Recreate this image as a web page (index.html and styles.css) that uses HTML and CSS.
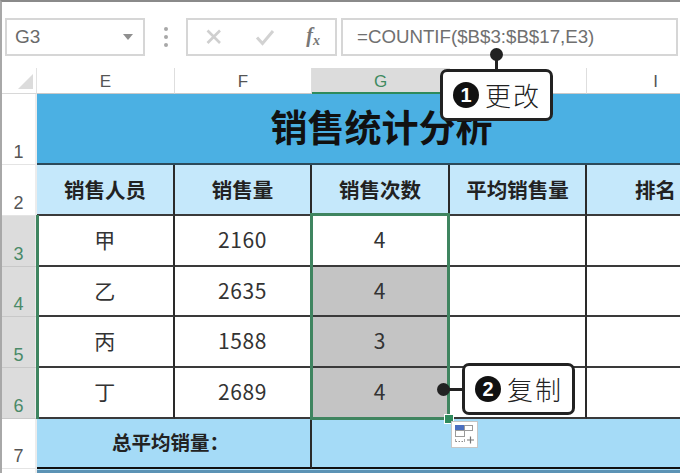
FILE: index.html
```html
<!DOCTYPE html>
<html lang="zh">
<head>
<meta charset="utf-8">
<title>销售统计分析</title>
<link rel="stylesheet" href="styles.css">
</head>
<body>
<div class="window">
  <div class="toolbar">
    <div class="namebox"><span>G3</span><i class="caret"></i></div>
    <div class="dots"><i></i><i></i><i></i></div>
    <div class="fxbox">
      <svg class="ic" width="18" height="18" viewBox="0 0 18 18"><path d="M2.500 2.500L15 15M15 2.500L2.500 15" stroke="#cfcfcf" stroke-width="2.600" fill="none"/></svg>
      <svg class="ic" width="20" height="18" viewBox="0 0 20 18"><path d="M2 9.500L7.500 15.500L18 3" stroke="#d2d2d2" stroke-width="3" fill="none"/></svg>
      <span class="fx">f<sub>x</sub></span>
    </div>
    <div class="formula">=COUNTIF($B$3:$B$17,E3)</div>
  </div>
  <div class="sheet">
    <div class="corner"><i></i></div>
    <div class="ch">E</div><div class="ch">F</div><div class="ch sel">G</div><div class="ch"></div><div class="ch last">I</div>

    <div class="rh">1</div>
    <div class="title">销售统计分析</div>

    <div class="rh">2</div>
    <div class="c head">销售人员</div><div class="c head">销售量</div><div class="c head">销售次数</div><div class="c head">平均销售量</div><div class="c head last">排名</div>

    <div class="rh rsel">3</div>
    <div class="c">甲</div><div class="c">2160</div><div class="c">4</div><div class="c"></div><div class="c last"></div>

    <div class="rh rsel">4</div>
    <div class="c">乙</div><div class="c">2635</div><div class="c gray">4</div><div class="c"></div><div class="c last"></div>

    <div class="rh rsel">5</div>
    <div class="c">丙</div><div class="c">1588</div><div class="c gray">3</div><div class="c"></div><div class="c last"></div>

    <div class="rh rsel">6</div>
    <div class="c">丁</div><div class="c">2689</div><div class="c gray">4</div><div class="c"></div><div class="c last"></div>

    <div class="rh">7</div>
    <div class="c total">总平均销量：</div><div class="c totalv"></div>

    <div class="rh tail"></div>
    <div class="tailrow"></div>
  </div>

  <div class="selection"><i class="handle"></i></div>
  <div class="rangeleft"></div>
  <div class="paste">
    <svg width="26" height="26" viewBox="0 0 26 26">
      <rect x="3.500" y="3.500" width="9" height="5" fill="#4a6fc0" stroke="#4a6fc0"/>
      <rect x="12.500" y="3.500" width="8" height="5" fill="#fff" stroke="#9a9a9a"/>
      <rect x="3.500" y="8.500" width="9" height="6" fill="#fff" stroke="#9a9a9a"/>
      <path d="M3.500 19.500h9" stroke="#888" stroke-dasharray="1.500 1.500" fill="none"/>
      <path d="M3.500 17v3M12.500 17v3" stroke="#aaa" fill="none"/>
      <path d="M15 18h7M18.500 14.500v7" stroke="#777" stroke-width="1.200" fill="none"/>
    </svg>
  </div>

  <div class="callout one">
    <i class="leader lv"></i><i class="dot"></i>
    <span class="num">1</span><span class="label">更改</span>
  </div>
  <div class="callout two">
    <i class="leader lh"></i><i class="dot"></i>
    <span class="num">2</span><span class="label">复制</span>
  </div>
</div>
</body>
</html>
```
FILE: styles.css
```css
* { box-sizing: border-box; }
html, body { margin: 0; padding: 0; background: #fff; }
body { width: 680px; height: 473px; overflow: hidden; font-family: "Noto Sans CJK SC", "Liberation Sans", sans-serif; color: #333; }
.window { position: relative; width: 680px; height: 473px; border-top: 2px solid #8a8a8a; border-left: 2px solid #a8a8a8; overflow: hidden; }

.toolbar { display: flex; align-items: center; height: 66px; padding: 15px 2px 12px 3px; }
.namebox, .fxbox, .formula { height: 38px; border: 2px solid #d6d6d6; background: #fff; display: flex; align-items: center; }
.namebox { width: 140px; padding: 0 10px 0 8px; justify-content: space-between; font: 19px "Liberation Sans", sans-serif; color: #6a6a6a; }
.caret { width: 0; height: 0; border-left: 5px solid transparent; border-right: 5px solid transparent; border-top: 6px solid #8f8f8f; }
.dots { width: 41px; display: flex; flex-direction: column; align-items: center; gap: 4px; }
.dots i { width: 4px; height: 4px; background: #a8a8a8; border-radius: 50%; }
.fxbox { width: 151px; padding: 0 15px 0 17px; justify-content: space-between; }
.fx { font: italic bold 20px "Liberation Serif", serif; color: #777; line-height: 1; margin-top: -3px; }
.fx sub { font-size: 14px; vertical-align: -3px; line-height: 0; }
.formula { flex: 1; margin-left: 4px; padding-left: 14px; font: 18.7px "Liberation Sans", sans-serif; color: #707070; }

.sheet { display: grid; grid-template-columns: 35px 138px 137px 138px 137px 1fr; grid-template-rows: 26px 71px 51px 51px 50px 51px 51px 50px 4px; }
.corner { position: relative; border-right: 1px solid #e2e2e2; border-bottom: 1px solid #d8d8d8; }
.corner i { position: absolute; right: 3px; bottom: 4px; width: 0; height: 0; border-left: 15px solid transparent; border-bottom: 15px solid #dcdcdc; }
.ch { display: flex; align-items: center; justify-content: center; padding-top: 3px; border-right: 1px solid #dedede; border-bottom: 1px solid #c8c8c8; font: 17px "Liberation Sans", sans-serif; color: #555; }
.ch.sel { background: #dcdcdc; color: #3f8a60; border-bottom: 2px solid #2f8a5c; }
.ch.last { border-right: 0; padding-left: 44px; }

.rh { display: flex; align-items: flex-end; justify-content: center; padding-bottom: 1px; border-right: 2px solid #ececec; border-bottom: 1px solid #e4e4e4; font: 18px "Liberation Sans", sans-serif; color: #555; line-height: 22px; }
.rsel { background: #dcdcdc; color: #4a8a68; border-bottom-color: #c8c8c8; }
.tail { border-bottom: 0; }

.title { grid-column: 2 / 7; background: #4bb0e3; border-bottom: 2px solid #2c4a5a; display: flex; align-items: center; justify-content: center; font-size: 37px; font-weight: 700; color: #111; padding: 0 0 5px 46px; }
.c { display: flex; align-items: center; justify-content: center; border-right: 2px solid #2a2a2a; border-bottom: 2px solid #3a3a3a; font-size: 21px; letter-spacing: 0.6px; color: #333; padding-bottom: 3px; }
.c.last { border-right: 0; }
.head { background: #c5e8fb; font-size: 20.5px; letter-spacing: 0; font-weight: 700; color: #222; padding-bottom: 2px; }
.head.last { padding-left: 44px; }
.gray { background: #c4c4c4; }
.total { grid-column: 2 / 4; background: #a5dbf7; font-size: 19.5px; letter-spacing: 0; font-weight: 700; color: #222; padding-right: 6px; border-bottom: 2px solid #111; }
.totalv { grid-column: 4 / 7; background: #a5dbf7; border-right: 0; border-bottom: 2px solid #111; }
.tailrow { grid-column: 2 / 7; background: #5c93b5; border-top: 1px solid #a5dbf7; }

.selection { position: absolute; left: 308px; top: 211px; width: 140px; height: 207px; border: 3px solid #3f8560; pointer-events: none; }
.handle { position: absolute; right: -6px; bottom: -6px; width: 8px; height: 8px; background: #2f8a5c; outline: 1px solid #fff; }
.rangeleft { position: absolute; left: 34px; top: 213px; width: 3px; height: 204px; background: #3f8560; }
.paste { position: absolute; left: 449px; top: 419px; width: 27px; height: 27px; background: #fff; border: 1px solid #c6c6c6; }
.paste svg { display: block; }

.callout { position: absolute; display: flex; align-items: center; height: 52px; background: #fff; border: 3px solid #222; border-radius: 7px; color: #222; }
.one { left: 438px; top: 67px; width: 113px; padding-left: 10px; gap: 6px; }
.two { left: 460px; top: 361px; width: 113px; padding-left: 10px; gap: 6px; }
.num { width: 26px; height: 26px; border-radius: 50%; background: #111; color: #fff; font: bold 20px/26px "Liberation Sans", sans-serif; text-align: center; flex: none; }
.label { font-size: 26px; font-weight: 300; letter-spacing: 2px; line-height: 1; }
.dot { position: absolute; width: 13px; height: 13px; border-radius: 50%; background: #222; }
.leader { position: absolute; background: #222; }
.one .dot { left: 47px; top: -24px; }
.one .lv { left: 52px; top: -15px; width: 3px; height: 15px; }
.two .dot { left: -28px; top: 17px; }
.two .lh { left: -18px; top: 22px; width: 18px; height: 3px; }
```
